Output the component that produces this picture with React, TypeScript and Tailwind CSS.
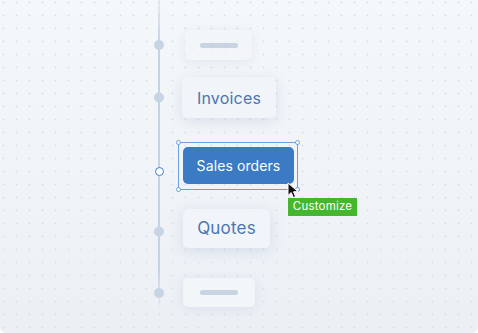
import React from 'react'

const font = { fontFamily: 'Inter, "Noto Sans", sans-serif' }

function Node({ hollow = false, shift = '' }: { hollow?: boolean; shift?: string }) {
  return (
    <div className={`w-[10px] shrink-0 flex justify-center ${shift}`}>
      {hollow ? (
        <div className="w-[9px] h-[9px] rounded-full border-[1.5px] border-[#3f7fcc] bg-white" />
      ) : (
        <div className="w-[10px] h-[10px] rounded-full bg-[#c7d4e3]" />
      )}
    </div>
  )
}

function Handle({ pos }: { pos: string }) {
  return <div className={`absolute w-[5px] h-[5px] rounded-full border border-[#6a9fe0] bg-white ${pos}`} />
}

export default function App() {
  return (
    <div
      className="w-[478px] h-[333px] overflow-hidden rounded-b-[6px] bg-[linear-gradient(180deg,#f5f8fa,#ecf0f5)]"
      style={font}
    >
      <div className="flex w-full h-full bg-[radial-gradient(circle,#d9dfe7_0.8px,transparent_1.2px)] bg-[length:13px_13px] bg-[position:-3px_-4px]">
        <div className="w-[158px] shrink-0" />
        <div className="w-[2px] h-[312px] shrink-0 bg-[linear-gradient(180deg,rgba(197,210,225,0.3),#c5d2e1_14%,#c5d2e1_86%,rgba(197,210,225,0))]" />

        <div className="-ml-[6px] flex flex-col pt-[30px]">
          {/* faded top card */}
          <div className="flex items-center">
            <Node />
            <div className="ml-[21px] w-[67px] h-[30px] rounded-[5px] bg-[#f2f5f9]/70 shadow-[0_2px_12px_rgba(150,170,200,0.2)] flex items-center justify-center">
              <div className="w-[38px] h-[5px] rounded-full bg-[#c8d4e2]" />
            </div>
          </div>

          {/* Invoices */}
          <div className="flex items-center mt-[17px]">
            <Node shift="-translate-y-[0.5px]" />
            <div className="ml-[18px] w-[94px] h-[41px] rounded-[5px] bg-[#f1f4f8] shadow-[0_3px_14px_rgba(140,160,195,0.25)] flex items-center justify-center">
              <span className="text-[16px] text-[#4a77b0] tracking-[0.2px]">Invoices</span>
            </div>
          </div>

          {/* Sales orders (selected) */}
          <div className="flex items-center mt-[24px]">
            <Node hollow shift="translate-y-[5px]" />
            <div className="relative ml-[14px] w-[120px] h-[48px] border border-[#6a9fe0] pl-[4px] pt-[4px]">
              <div className="w-[111px] h-[37px] rounded-[5px] bg-[#3a7bc4] flex items-center justify-center">
                <span className="text-[14px] text-white tracking-[0.1px]">Sales orders</span>
              </div>
              <Handle pos="-left-[3px] -top-[3px]" />
              <Handle pos="-right-[3px] -top-[3px]" />
              <Handle pos="-left-[3px] -bottom-[3px]" />
              <Handle pos="-right-[3px] -bottom-[3px]" />
              <svg className="absolute left-[108px] top-[39px]" width="13" height="17" viewBox="0 0 13 17">
                <path d="M1 1 L1 13.5 L4.2 10.6 L6.4 15.6 L8.6 14.6 L6.5 9.8 L11 9.6 Z" fill="#111" stroke="#fff" strokeWidth="1" strokeLinejoin="round" />
              </svg>
              <div className="absolute left-[109px] top-[55px] w-[69px] h-[18px] bg-[#44b72d] flex items-center justify-center">
                <span className="text-[11.5px] text-white leading-none tracking-[0.2px]">Customize</span>
              </div>
            </div>
          </div>

          {/* Quotes */}
          <div className="flex items-center mt-[19px]">
            <Node shift="translate-y-[2.5px]" />
            <div className="ml-[19px] w-[87px] h-[39px] rounded-[5px] bg-[#f1f4f8] shadow-[0_3px_14px_rgba(140,160,195,0.25)] flex items-center justify-center">
              <span className="text-[17px] text-[#4a77b0] tracking-[0.2px]">Quotes</span>
            </div>
          </div>

          {/* faded bottom card */}
          <div className="flex items-center mt-[30px]">
            <Node />
            <div className="ml-[19px] w-[72px] h-[29px] rounded-[5px] bg-[#f3f6f8] shadow-[0_2px_12px_rgba(150,170,200,0.22)] flex items-center justify-center">
              <div className="w-[38px] h-[5px] rounded-full bg-[#c8d4e2]" />
            </div>
          </div>
        </div>
      </div>
    </div>
  )
}
